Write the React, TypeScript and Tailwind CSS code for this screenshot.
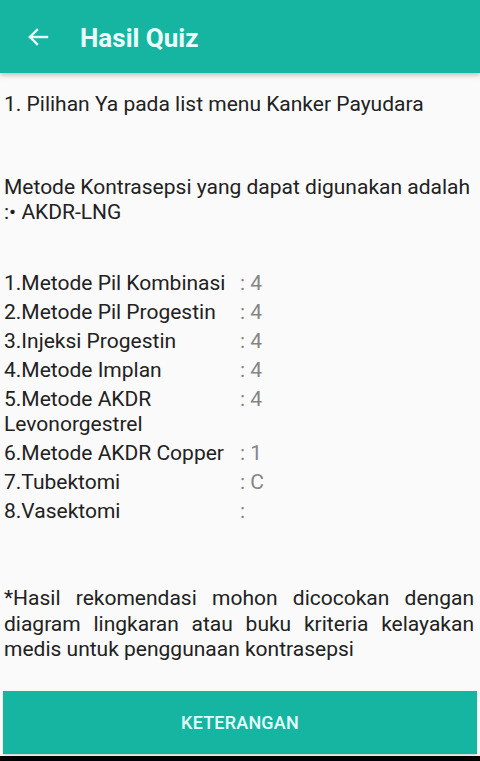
import React from "react";

const rows: [string, string][] = [
  ["1.Metode Pil Kombinasi", ": 4"],
  ["2.Metode Pil Progestin", ": 4"],
  ["3.Injeksi Progestin", ": 4"],
  ["4.Metode Implan", ": 4"],
  ["5.Metode AKDR Levonorgestrel", ": 4"],
  ["6.Metode AKDR Copper", ": 1"],
  ["7.Tubektomi", ": C"],
  ["8.Vasektomi", ":"],
];

export default function App() {
  return (
    <div
      className="w-[480px] h-[761px] bg-[#fafafa] flex flex-col overflow-hidden text-[#212121]"
      style={{ fontFamily: "Roboto, 'Noto Sans', sans-serif" }}
    >
      <div className="h-[73px] bg-[#15b5a2] flex items-center shadow-[0_2px_5px_rgba(0,0,0,0.25)] relative z-10 shrink-0">
        <svg
          width="24"
          height="24"
          viewBox="0 0 24 24"
          className="ml-[26px]"
          fill="none"
          stroke="#e8fffb"
          strokeWidth="2.4"
          strokeLinecap="square"
        >
          <path d="M21 12H4" />
          <path d="M11 5l-7 7 7 7" />
        </svg>
        <span className="ml-[30px] pt-[4px] text-[26px] font-bold text-[#eafffb]">
          Hasil Quiz
        </span>
      </div>

      <div className="px-[4px] pt-[19px] text-[21px] leading-[25px]">
        <div>1. Pilihan Ya pada list menu Kanker Payudara</div>
        <div className="mt-[58px]">
          Metode Kontrasepsi yang dapat digunakan adalah :• AKDR-LNG
        </div>
        <div className="mt-[46px] flex flex-col gap-[4px]">
          {rows.map(([label, val]) => (
            <div key={label} className="flex">
              <div className="w-[236px]">{label}</div>
              <div className="text-[#858585]">{val}</div>
            </div>
          ))}
        </div>
        <div className="mt-[62px] text-justify leading-[25.5px] pr-[2px]">
          *Hasil rekomendasi mohon dicocokan dengan diagram lingkaran atau buku kriteria kelayakan medis untuk penggunaan kontrasepsi
        </div>
      </div>

      <div className="mt-auto mx-[3px] h-[63px] bg-[#15b5a2] flex items-center justify-center shadow-[0_1px_2px_rgba(0,0,0,0.2)]">
        <span className="text-[18px] font-medium text-[#e3fffa] tracking-[0.2px]">KETERANGAN</span>
      </div>
      <div className="h-[2px]" />
      <div className="h-[5px] bg-black shrink-0" />
    </div>
  );
}
